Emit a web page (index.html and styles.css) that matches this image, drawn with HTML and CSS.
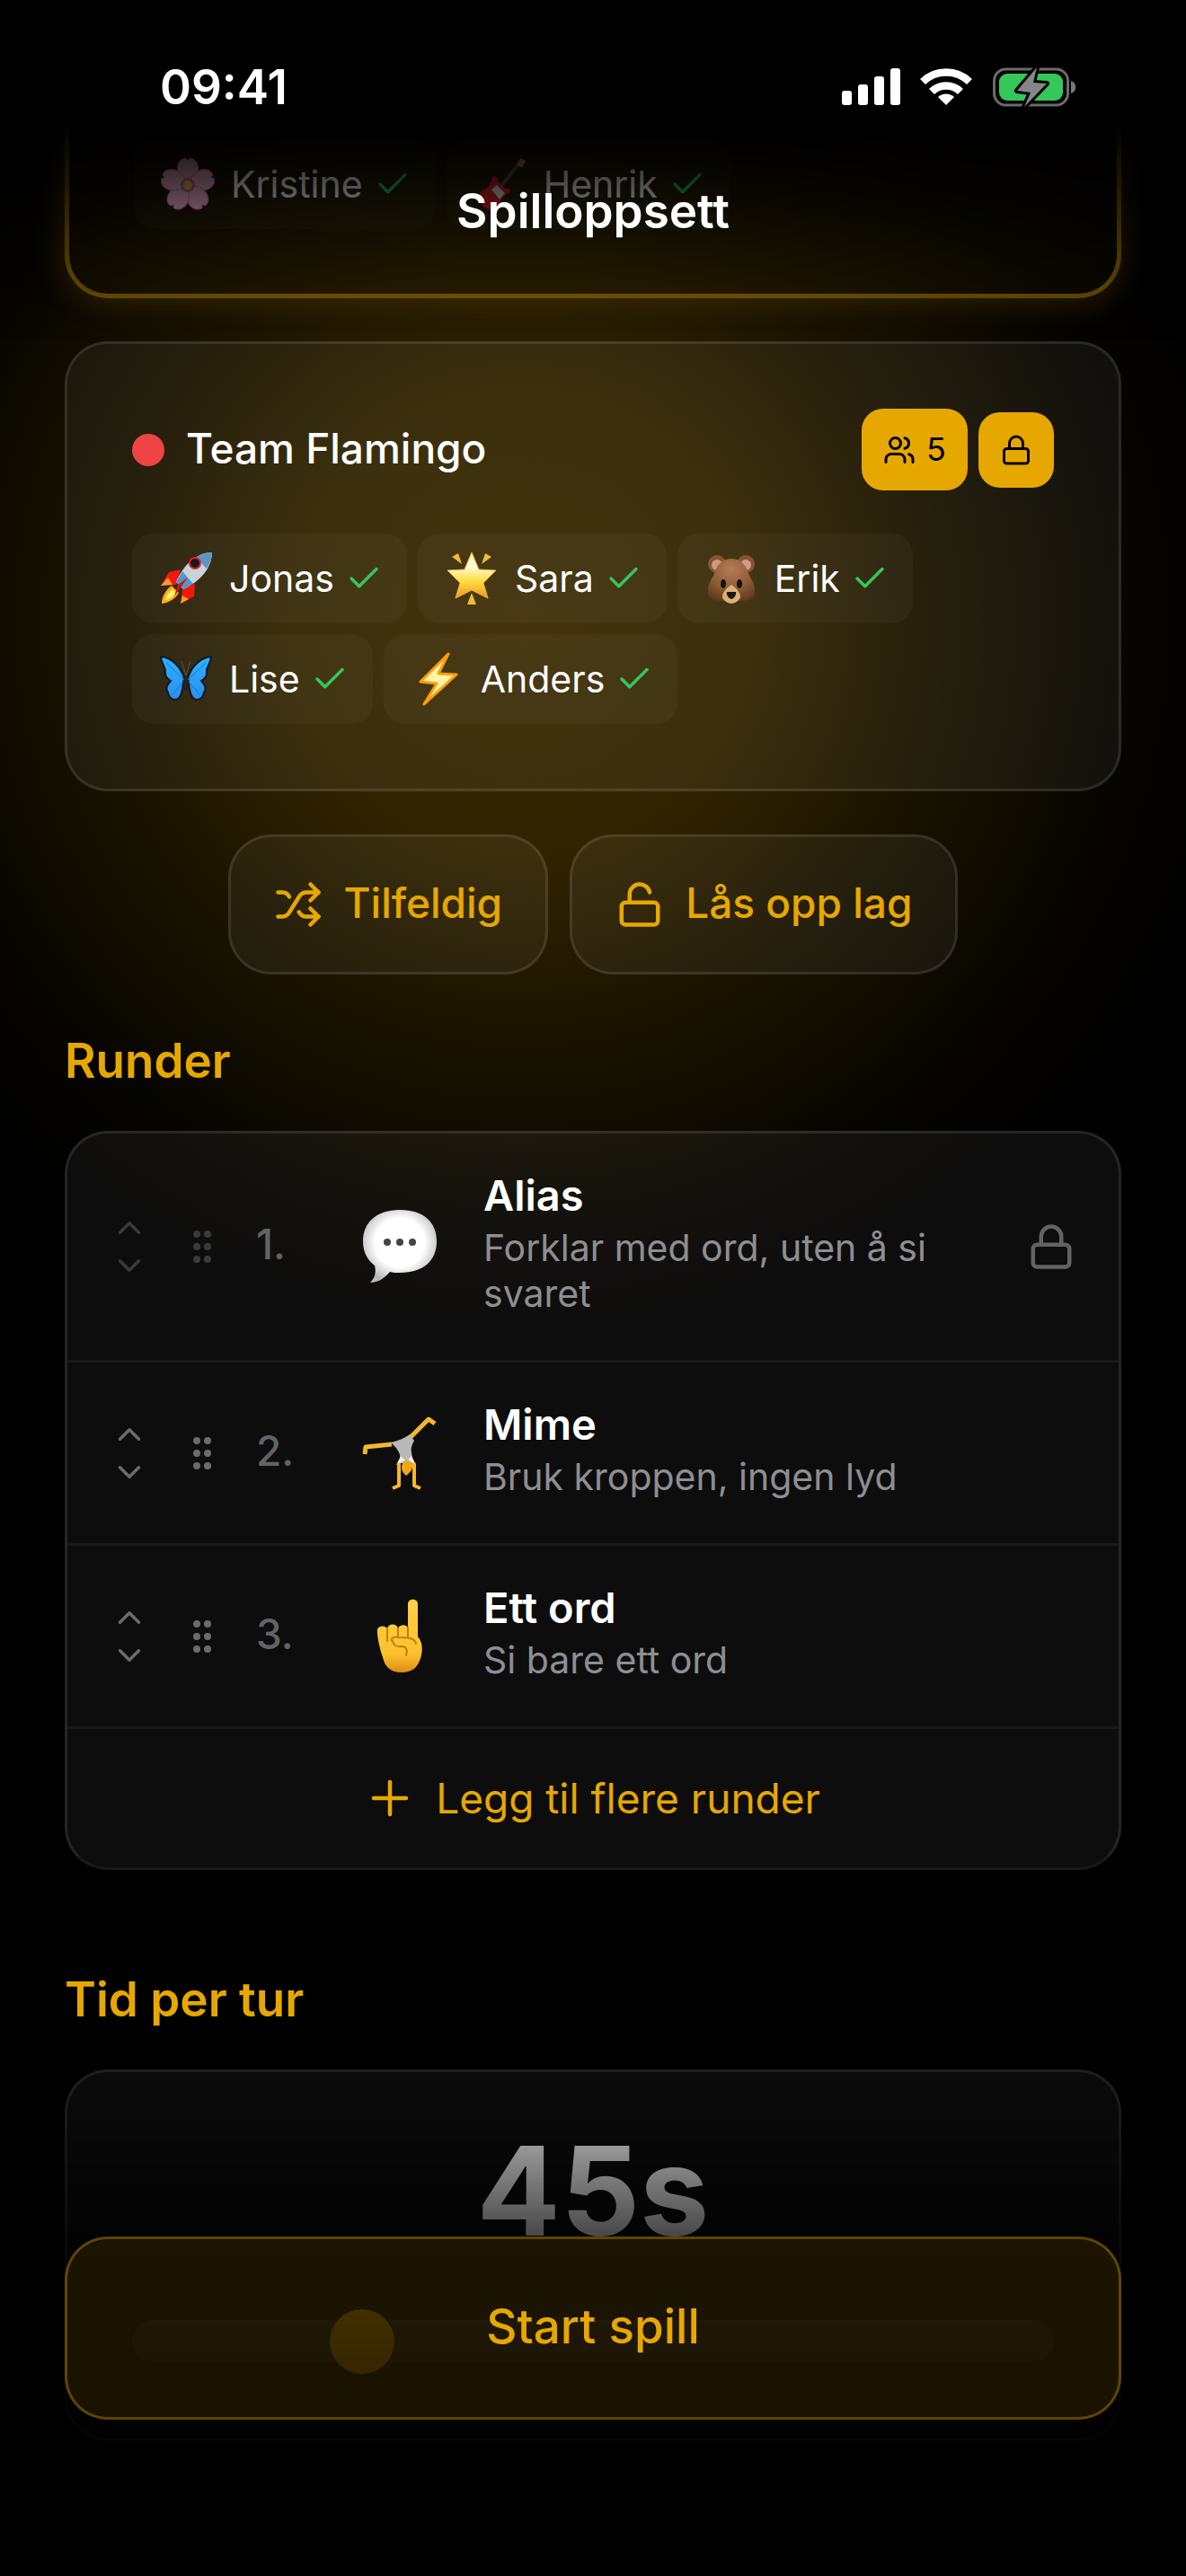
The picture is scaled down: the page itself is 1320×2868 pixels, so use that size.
FILE: index.html
```
<!DOCTYPE html>
<html lang="nb">
<head>
    <meta charset="UTF-8">
    <meta name="viewport" content="width=device-width, initial-scale=1.0">
    <title>Spilloppsett</title>
    <link rel="stylesheet" href="styles.css">
</head>
<body>
    <svg class="sprite" aria-hidden="true">
        <symbol id="check" viewBox="0 0 24 24"><path d="M20 6 9 17l-5-5"/></symbol>
        <symbol id="up" viewBox="0 0 24 24"><path d="m18 15-6-6-6 6"/></symbol>
        <symbol id="down" viewBox="0 0 24 24"><path d="m6 9 6 6 6-6"/></symbol>
        <symbol id="plus" viewBox="0 0 24 24"><path d="M4 12h16M12 4v16"/></symbol>
        <symbol id="lock" viewBox="0 0 24 24"><rect x="3" y="11" width="18" height="11" rx="2"/><path d="M7 11V7a5 5 0 0 1 10 0v4"/></symbol>
        <symbol id="unlock" viewBox="0 0 24 24"><rect x="3" y="11" width="18" height="11" rx="2"/><path d="M7 11V7a5 5 0 0 1 9.9-1"/></symbol>
        <symbol id="users" viewBox="0 0 24 24"><path d="M16 21v-2a4 4 0 0 0-4-4H6a4 4 0 0 0-4 4v2"/><circle cx="9" cy="7" r="4"/><path d="M22 21v-2a4 4 0 0 0-3-3.87"/><path d="M16 3.13a4 4 0 0 1 0 7.75"/></symbol>
        <symbol id="shuffle" viewBox="0 0 24 24"><path d="m18 14 4 4-4 4"/><path d="m18 2 4 4-4 4"/><path d="M2 18h1.973a4 4 0 0 0 3.3-1.7l5.454-8.6a4 4 0 0 1 3.3-1.7H22"/><path d="M2 6h1.972a4 4 0 0 1 3.6 2.2"/><path d="M22 18h-6.041a4 4 0 0 1-3.3-1.8l-.359-.45"/></symbol>
        <symbol id="grip" viewBox="0 0 24 24"><g fill="currentColor"><circle cx="9" cy="5" r="1"/><circle cx="9" cy="12" r="1"/><circle cx="9" cy="19" r="1"/><circle cx="15" cy="5" r="1"/><circle cx="15" cy="12" r="1"/><circle cx="15" cy="19" r="1"/></g></symbol>

        <linearGradient id="gold" x1="0" y1="0" x2="0" y2="1"><stop offset="0" stop-color="#fff3a0"/><stop offset=".3" stop-color="#fffbe0"/><stop offset=".6" stop-color="#ffe04a"/><stop offset="1" stop-color="#ee9a12"/></linearGradient>
        <linearGradient id="skin" x1="0" y1="0" x2="0" y2="1"><stop offset="0" stop-color="#ffcf45"/><stop offset=".75" stop-color="#fcc12f"/><stop offset="1" stop-color="#e08b12"/></linearGradient>
        <linearGradient id="wing" x1="0" y1="0" x2="0" y2="1"><stop offset="0" stop-color="#27b4ff"/><stop offset="1" stop-color="#2f8df0"/></linearGradient>
        <radialGradient id="bubble" cx=".5" cy=".45" r=".56"><stop offset=".6" stop-color="#fff"/><stop offset="1" stop-color="#b9b9b9"/></radialGradient>
        <radialGradient id="fur" cx=".5" cy=".25" r=".8"><stop offset="0" stop-color="#b87b58"/><stop offset=".6" stop-color="#8a5a34"/><stop offset="1" stop-color="#5e3a1c"/></radialGradient>
    </svg>

    <header class="topbar">
        <div class="status">
            <time class="clock">09:41</time>
            <div class="status-icons">
                <svg width="66" height="42" viewBox="0 0 66 42" fill="#fff">
                    <rect x="1" y="25" width="11" height="16" rx="3"/>
                    <rect x="19" y="18" width="11" height="23" rx="3"/>
                    <rect x="37" y="9" width="11" height="32" rx="3"/>
                    <rect x="55" y="0" width="11" height="41" rx="3"/>
                </svg>
                <svg width="58" height="42" viewBox="0 0 58 42">
                    <path d="M3 15a37.5 37.5 0 0 1 52 0M13 26a22.7 22.7 0 0 1 32 0" fill="none" stroke="#fff" stroke-width="8.5"/>
                    <path d="m29 41-9-9a13 13 0 0 1 18 0z" fill="#fff"/>
                </svg>
                <svg width="94" height="46" viewBox="0 0 94 46">
                    <rect x="2.5" y="3" width="82" height="40" rx="13" fill="none" stroke="#6b6b6b" stroke-width="3"/>
                    <path d="M88 16c7 2 7 12 0 14z" fill="#777"/>
                    <rect x="8" y="8" width="71" height="30" rx="9" fill="#34c759"/>
                    <path d="M50 1 28 27l15 2-7 16 25-26-15-1z" fill="#868686" stroke="#000" stroke-width="6" stroke-linejoin="round" paint-order="stroke"/>
                </svg>
            </div>
        </div>
        <h1>Spilloppsett</h1>
    </header>

    <main>
        <section class="card team active">
            <ul class="chips">
                <li class="chip">
                    <svg class="emoji" viewBox="0 0 60 60"><g fill="#f3b3d2" stroke="#c978a6" stroke-width="1"><path id="petal" d="M30 31C20 24 16 14 20 6c2-4 6-5 8-5l2 3 2-3c2 0 6 1 8 5 4 8 0 18-10 25z"/><use href="#petal" transform="rotate(72 30 31)"/><use href="#petal" transform="rotate(144 30 31)"/><use href="#petal" transform="rotate(216 30 31)"/><use href="#petal" transform="rotate(288 30 31)"/></g><circle cx="30" cy="31" r="8" fill="#d0689a"/><circle cx="30" cy="31" r="5" fill="#f3c84a"/></svg>
                    <span>Kristine</span><svg class="icon check"><use href="#check"/></svg>
                </li>
                <li class="chip">
                    <svg class="emoji" viewBox="0 0 60 60"><path d="M50 8 26 38" stroke="#6b5146" stroke-width="4"/><path d="m48 8 5-7 5 3-4 8z" fill="#d49a63"/><path d="M21 22c4-3 6 1 6 5l8 8c5-1 8 2 4 5-6 3-8 7-10 13-3 7-13 7-19 1-6-7-5-15 2-18 6-3 7-7 9-14z" fill="#d8232a"/><path d="m20 36 6-5 9 9-6 7z" fill="#ddd"/></svg>
                    <span>Henrik</span><svg class="icon check"><use href="#check"/></svg>
                </li>
            </ul>
        </section>

        <section class="card team">
            <div class="team-head">
                <span class="dot"></span>
                <h2>Team Flamingo</h2>
                <span class="badge"><svg class="icon"><use href="#users"/></svg>5</span>
                <button class="badge" aria-label="Lås lag"><svg class="icon"><use href="#lock"/></svg></button>
            </div>
            <ul class="chips">
                <li class="chip">
                    <svg class="emoji" viewBox="0 0 60 60"><path d="m24 20-13 3-9 15 17-1zM40 36l-1 14-15 8 2-16z" fill="#f3170c"/><path d="M2 38l8-9 5 8zM24 58l2-9 7 4z" fill="#ff9d2e"/><path d="M14 38C6 44 3 52 3 58c8-1 15-5 19-12z" fill="#ffb21a"/><path d="M15 42c-5 4-7 8-8 12 5-1 9-4 12-8z" fill="#fff06a"/><path d="M59 1C43 1 27 14 19 34l8 8C47 33 59 17 59 1z" fill="#c8d3dc"/><path d="M59 1c-6 0-12 2-18 6l12 12c4-6 6-12 6-18zM26 22l-7 12 8 8 11-6z" fill="#5c94c4"/><circle cx="40" cy="13" r="7" fill="#d6232b"/><circle cx="40" cy="13" r="5" fill="#17191c"/><path d="m32 29-15 21 4-13z" fill="#c8151c"/></svg>
                    <span>Jonas</span><svg class="icon check"><use href="#check"/></svg>
                </li>
                <li class="chip">
                    <svg class="emoji" viewBox="0 0 60 60"><path d="m30 1 8 19 19 1-14 14 5 17-18-9-18 9 5-17L3 21l19-1z" fill="url(#gold)" stroke="#f2b53a" stroke-width="1" stroke-linejoin="round"/><path d="m8 6 7-4 4 12zM52 6l-7-4-4 12zM30 46l5 13H25z" fill="#f0bb3a"/></svg>
                    <span>Sara</span><svg class="icon check"><use href="#check"/></svg>
                </li>
                <li class="chip">
                    <svg class="emoji" viewBox="0 0 60 60"><circle cx="14" cy="14" r="10" fill="#87552f"/><circle cx="46" cy="14" r="10" fill="#87552f"/><circle cx="14" cy="15" r="6" fill="#d39a83"/><circle cx="46" cy="15" r="6" fill="#d39a83"/><path d="M30 8c12 0 17 9 20 19 4 6 7 13 6 19-1 9-9 9-26 9S5 55 4 46c-1-6 2-13 6-19C13 17 18 8 30 8z" fill="url(#fur)"/><path d="M30 37c4 3 10 8 10 13 0 4-6 8-10 8s-10-4-10-8c0-5 6-10 10-13z" fill="#ddb170"/><path d="M25 45h10c1 4-3 8-5 8s-6-4-5-8z" fill="#161616"/><ellipse cx="21" cy="36" rx="3" ry="5" fill="#111"/><ellipse cx="39" cy="36" rx="3" ry="5" fill="#111"/></svg>
                    <span>Erik</span><svg class="icon check"><use href="#check"/></svg>
                </li>
                <li class="chip">
                    <svg class="emoji" viewBox="0 0 60 60"><g id="half"><path d="M28 29C24 16 14 6 2 5c0 6 4 10 5 15 0 5-1 8 6 12-4 4-6 9-3 13 1 6 5 8 8 8 5 0 8-8 9-19z" fill="url(#wing)" stroke="#101820" stroke-width="2"/><path d="M28 31 8 12M27 33 14 48" stroke="#1a74cf" stroke-width="1"/></g><use href="#half" transform="matrix(-1 0 0 1 60 0)"/><path d="M30 26v15" stroke="#2b211b" stroke-width="4" stroke-linecap="round"/><path d="M30 26 25 10M30 26l5-16" stroke="#5b5145" stroke-width="1"/></svg>
                    <span>Lise</span><svg class="icon check"><use href="#check"/></svg>
                </li>
                <li class="chip">
                    <svg class="emoji" viewBox="0 0 60 60"><path d="M42 2 11 33l18 2-14 23 36-33-20-1z" fill="#fff3a8" stroke="#ff9e0b" stroke-width="3" stroke-linejoin="round"/></svg>
                    <span>Anders</span><svg class="icon check"><use href="#check"/></svg>
                </li>
            </ul>
        </section>

        <div class="actions">
            <button class="btn"><svg class="icon"><use href="#shuffle"/></svg><span>Tilfeldig</span></button>
            <button class="btn"><svg class="icon"><use href="#unlock"/></svg><span>Lås opp lag</span></button>
        </div>

        <h2 class="section-title">Runder</h2>
        <section class="card rounds">
            <ol>
                <li class="round locked">
                    <div class="move">
                        <button aria-label="Flytt opp" disabled><svg class="icon"><use href="#up"/></svg></button>
                        <button aria-label="Flytt ned" disabled><svg class="icon"><use href="#down"/></svg></button>
                    </div>
                    <svg class="icon grip"><use href="#grip"/></svg>
                    <span class="num">1.</span>
                    <svg class="round-emoji" viewBox="0 0 90 90"><path d="M45 4c27 0 41 14 41 35S72 74 45 74c-4 0-8 0-11-1-6 7-13 12-22 12 5-5 7-11 5-19C9 60 4 51 4 39 4 18 19 4 45 4z" fill="url(#bubble)"/><g fill="#444"><circle cx="31" cy="40" r="4"/><circle cx="45" cy="40" r="4"/><circle cx="59" cy="40" r="4"/></g></svg>
                    <div class="info"><h3>Alias</h3><p>Forklar med ord, uten å si svaret</p></div>
                    <svg class="icon lock"><use href="#lock"/></svg>
                </li>
                <li class="round">
                    <div class="move">
                        <button aria-label="Flytt opp"><svg class="icon"><use href="#up"/></svg></button>
                        <button aria-label="Flytt ned"><svg class="icon"><use href="#down"/></svg></button>
                    </div>
                    <svg class="icon grip"><use href="#grip"/></svg>
                    <span class="num">2.</span>
                    <svg class="round-emoji" viewBox="0 0 90 90"><path d="M36 35 7 38l-1 8M56 28 77 7l7 5" fill="none" stroke="#f5b72b" stroke-width="5" stroke-linejoin="round"/><path d="M35 33c8-2 14-4 21-9l5 7c-3 5-4 9-3 13l2 12H45c2-9-1-15-10-23z" fill="#b9b9b9"/><path d="m46 48-5 10 10-5zM58 48l5 10-9-5z" fill="#eee"/><path d="M44 56v25l-7 3M61 56v25l7 3" fill="none" stroke="#f5b72b" stroke-width="4" stroke-linejoin="round"/><path d="M53 53c5 0 7 4 6 8-1 4-4 6-7 9-3-3-5-5-5-9s2-8 6-8z" fill="#f0a818"/></svg>
                    <div class="info"><h3>Mime</h3><p>Bruk kroppen, ingen lyd</p></div>
                </li>
                <li class="round">
                    <div class="move">
                        <button aria-label="Flytt opp"><svg class="icon"><use href="#up"/></svg></button>
                        <button aria-label="Flytt ned"><svg class="icon"><use href="#down"/></svg></button>
                    </div>
                    <svg class="icon grip"><use href="#grip"/></svg>
                    <span class="num">3.</span>
                    <svg class="round-emoji" viewBox="0 0 90 90"><path d="M54 9c0-7 11-7 11 0v36c7 8 5 20 2 27-3 8-9 13-20 13-13 0-19-7-21-17-3-8-7-25-6-31 1-4 8-5 11-1 1-6 11-6 12 0 2-5 10-5 11 0z" fill="url(#skin)"/><path d="M31 36v14M43 36v10M54 35v11M36 50c-1-4 3-5 7-4 12 0 19 1 20 7M37 50c1 5 5 7 10 6 5 0 7 4 5 10" fill="none" stroke="#c57d12" stroke-width="2" stroke-linecap="round"/></svg>
                    <div class="info"><h3>Ett ord</h3><p>Si bare ett ord</p></div>
                </li>
            </ol>
            <button class="add"><svg class="icon"><use href="#plus"/></svg>Legg til flere runder</button>
        </section>

        <h2 class="section-title later">Tid per tur</h2>
        <section class="card time">
            <output class="seconds" for="seconds">45s</output>
            <input id="seconds" type="range" min="15" max="145" value="45" aria-label="Tid per tur">
        </section>
    </main>

    <footer class="bottombar">
        <button class="start">Start spill</button>
    </footer>
</body>
</html>
```
FILE: styles.css
```
:root {
    --accent: #e6a800;
    --glass: rgba(255, 255, 255, 0.05);
    --line: rgba(255, 255, 255, 0.1);
}
* {
    box-sizing: border-box;
    margin: 0;
    padding: 0;
}
body {
    background: #000 radial-gradient(circle 820px at 44% 690px, rgba(230, 168, 0, 0.25), rgba(230, 168, 0, 0.21) 32%, rgba(230, 168, 0, 0.11) 58%, rgba(230, 168, 0, 0.03) 82%, transparent) no-repeat;
    color: #fff;
    font-family: Inter, "Liberation Sans", sans-serif;
    font-size: 41px;
    overflow: hidden;
}
ul, ol {
    list-style: none;
}
button {
    background: none;
    border: none;
    color: inherit;
    font: inherit;
}
.sprite {
    position: absolute;
    width: 0;
    height: 0;
}
.icon {
    flex: none;
    width: 54px;
    height: 54px;
    fill: none;
    stroke: currentColor;
    stroke-width: 2;
    stroke-linecap: round;
    stroke-linejoin: round;
}

/* top and bottom overlays */
.topbar {
    position: fixed;
    top: 0;
    left: 0;
    right: 0;
    height: 380px;
    z-index: 2;
    background: linear-gradient(#000 36%, rgba(0, 0, 0, 0.66) 56%, rgba(0, 0, 0, 0.3) 76%, transparent);
}
.status {
    display: flex;
    justify-content: space-between;
    align-items: center;
    height: 193px;
    padding: 0 122px 0 178px;
}
.clock {
    font-size: 53px;
    font-weight: 600;
}
.status-icons {
    display: flex;
    align-items: center;
    gap: 22px;
}
h1 {
    font-size: 53px;
    font-weight: 600;
    line-height: 84px;
    text-align: center;
}
.bottombar {
    position: fixed;
    left: 0;
    right: 0;
    bottom: 0;
    padding: 230px 72px 174px;
    z-index: 2;
    background: linear-gradient(transparent, rgba(0, 0, 0, 0.72) 38%, rgba(0, 0, 0, 0.86) 60%, rgba(0, 0, 0, 0.88));
}
.start {
    width: 100%;
    height: 204px;
    padding-bottom: 4px;
    border: 3px solid rgba(230, 168, 0, 0.33);
    border-radius: 48px;
    background: rgba(230, 168, 0, 0.11);
    color: var(--accent);
    font-size: 53px;
    font-weight: 500;
}

main {
    padding: 0 72px 150px;
}
.card {
    border: 3px solid var(--line);
    border-radius: 48px;
    background: var(--glass);
}

/* teams */
.team {
    padding: 72px;
}
.team.active {
    margin-bottom: 48px;
    padding-top: 150px;
    border: 5px solid rgba(230, 168, 0, 0.45);
    background: rgba(230, 168, 0, 0.04);
    box-shadow: 0 0 36px rgba(230, 168, 0, 0.25);
}
.team-head {
    display: flex;
    align-items: center;
    gap: 12px;
    margin-bottom: 48px;
}
.team-head h2 {
    flex: 1;
    margin-left: 12px;
    padding-bottom: 4px;
    font-size: 46px;
    font-weight: 500;
}
.dot {
    width: 36px;
    height: 36px;
    border-radius: 50%;
    background: #ef4444;
}
.badge {
    display: flex;
    align-items: center;
    gap: 12px;
    padding: 24px;
    border-radius: 24px;
    background: var(--accent);
    color: #000;
    font-size: 36px;
    line-height: 43px;
}
.badge .icon {
    width: 36px;
    height: 36px;
}
.chips {
    display: flex;
    flex-wrap: wrap;
    gap: 12px;
}
.chip {
    display: flex;
    align-items: center;
    height: 100px;
    padding: 0 27px 0 30px;
    border-radius: 24px;
    background: rgba(255, 255, 255, 0.03);
}
.emoji {
    width: 60px;
    height: 60px;
    margin-right: 18px;
}
.check {
    width: 42px;
    height: 42px;
    margin-left: 12px;
    color: #34c759;
}

.actions {
    display: flex;
    justify-content: center;
    gap: 24px;
    margin: 48px 0 66px;
}
.btn {
    display: flex;
    align-items: center;
    gap: 24px;
    height: 156px;
    padding: 0 48px;
    border: 3px solid var(--line);
    border-radius: 48px;
    background: var(--glass);
    color: var(--accent);
    font-size: 46px;
    font-weight: 500;
}
.btn span {
    padding-bottom: 4px;
}

/* rounds */
.section-title {
    margin-bottom: 48px;
    color: var(--accent);
    font-size: 53px;
    font-weight: 600;
    line-height: 60px;
}
.later {
    margin-top: 114px;
}
.rounds {
    border-bottom-color: rgba(255, 255, 255, 0.05);
}
.round {
    display: flex;
    align-items: center;
    padding: 48px;
    border-bottom: 3px solid var(--glass);
}
.move {
    display: flex;
    flex-direction: column;
    margin-right: 36px;
    color: #6c6c6e;
}
.move button, .move .icon {
    display: block;
    width: 42px;
    height: 42px;
}
.grip {
    width: 48px;
    height: 48px;
    margin-right: 36px;
    color: #6c6c6e;
}
.locked .move, .locked .grip {
    color: #3a3a3c;
}
.num {
    width: 115px;
    padding-bottom: 6px;
    color: #636366;
    font-size: 46px;
    font-weight: 500;
}
.round-emoji {
    flex: none;
    width: 90px;
    height: 90px;
    margin-right: 48px;
}
.info {
    flex: 1;
}
.info h3 {
    margin-bottom: 12px;
    font-size: 47px;
    font-weight: 600;
    line-height: 42px;
}
.info p {
    color: #8e8e93;
    line-height: 51px;
}
.lock {
    margin-left: 48px;
    color: #636366;
}
.add {
    display: flex;
    align-items: center;
    justify-content: center;
    gap: 24px;
    width: 100%;
    height: 154px;
    color: var(--accent);
    font-size: 46px;
}

/* time slider */
.time {
    padding: 48px 72px 72px;
}
.seconds {
    display: block;
    font-size: 138px;
    font-weight: 700;
    line-height: 168px;
    text-align: center;
}
input[type="range"] {
    appearance: none;
    display: block;
    width: 100%;
    height: 72px;
    margin-top: 48px;
    background: none;
}
input[type="range"]::-webkit-slider-runnable-track {
    height: 48px;
    border-radius: 24px;
    background: var(--line);
}
input[type="range"]::-webkit-slider-thumb {
    appearance: none;
    width: 72px;
    height: 72px;
    margin-top: -12px;
    border-radius: 50%;
    background: var(--accent);
}
```
